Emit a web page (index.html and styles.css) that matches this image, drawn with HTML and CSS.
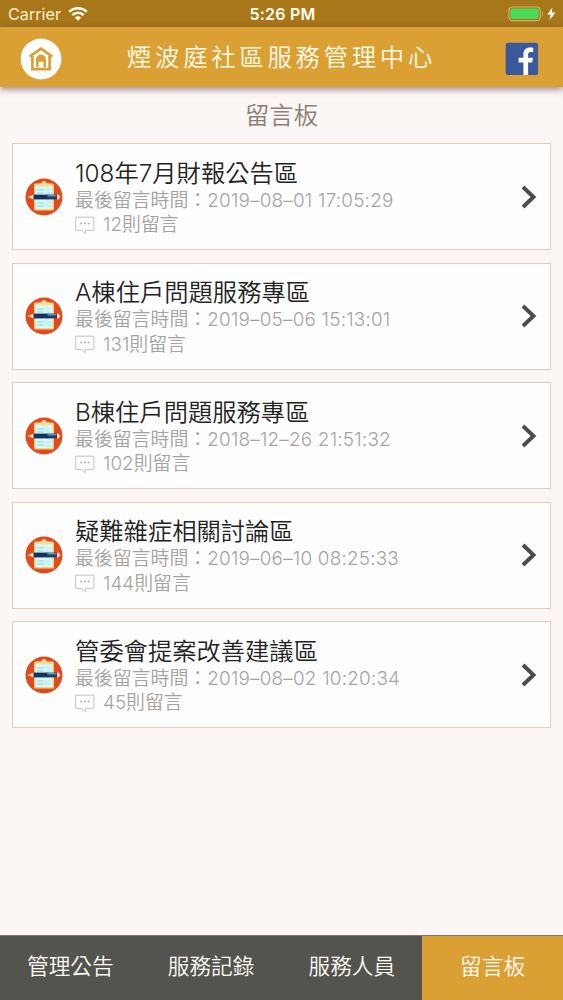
FILE: index.html
```html
<!DOCTYPE html>
<html lang="zh-Hant">
<head>
<meta charset="utf-8">
<title>留言板</title>
<link rel="stylesheet" href="styles.css">
</head>
<body>
<svg class="defs" width="0" height="0">
  <symbol id="board" viewBox="0 0 38 38">
    <circle cx="19" cy="19" r="18.5" fill="#e24a1b"/>
    <rect x="9" y="5.5" width="20" height="27" rx="1.5" fill="#f8cf82"/>
    <rect x="10.6" y="7.5" width="16.8" height="23.5" fill="#d8f8f6"/>
    <path d="M14 8.5V5.5h2.5a2.5 2.5 0 0 1 5 0H24v3z" fill="#f9dc9a"/>
    <path d="M12 12h7M12 15h7M12 25h7M12 28h7" stroke="#9fe3ea" stroke-width="1.3"/>
    <path d="M20 12h6M20 15h6M20 25h6M20 28h6" stroke="#baf1ee" stroke-width="1.3"/>
    <path d="M2.5 19 9 16.6v4.8z" fill="#fbe0bb"/>
    <rect x="8.5" y="16.6" width="15" height="4.8" fill="#17305c"/>
    <rect x="22.5" y="16.6" width="9.5" height="4.8" fill="#203d70"/>
    <path d="M22.5 17.8h9" stroke="#8db1d0" stroke-width="1"/>
    <path d="M32 16.6h1.5l2 2.4-2 2.4H32z" fill="#f2d2b8"/>
  </symbol>
  <symbol id="bubble" viewBox="0 0 20 19">
    <path d="M.7 1.2h18.2v13.1h-8.6v3.4l-4.1-3.4H.7z" fill="none" stroke="#c4c2c2" stroke-width="1" stroke-linejoin="round"/>
    <path d="M5.3 7.5h1.8M9 7.5h1.8M12.7 7.5h1.8" stroke="#a9a7a7" stroke-width="1.5"/>
  </symbol>
  <symbol id="arrow" viewBox="0 0 16 24">
    <path d="M2 2 12.5 12 2 22" fill="none" stroke="#4c4c4c" stroke-width="3.9"/>
  </symbol>
</svg>
<div class="app">
  <div class="status">
    <div class="carrier"><span>Carrier</span>
      <svg width="20" height="14" viewBox="0 0 20 14"><g fill="none" stroke="#fffdf0" stroke-width="2.6"><path d="M1.2 4.8a12.6 12.6 0 0 1 17.6 0"/><path d="M4.3 8.2a8 8 0 0 1 11.4 0"/></g><path d="M10 13.8 6.8 10.6a4.6 4.6 0 0 1 6.4 0z" fill="#fffdf0"/></svg>
    </div>
    <div class="time">5:26 PM</div>
    <svg class="battery" width="49" height="16" viewBox="0 0 49 16"><rect x=".9" y="1" width="31.4" height="13.6" rx="3.5" fill="none" stroke="#d5ae62" stroke-width="1.2"/><rect x="2.4" y="2.6" width="28.3" height="10.4" rx="1.8" fill="#47d957"/><path d="M34 5.2q2 2.6 0 5.2z" fill="#d5ae62"/><path d="m44.4 1.5-5.2 7h3.5l-1.2 5.7 6-7.6h-3.7z" fill="#fff"/></svg>
  </div>
  <header class="header">
    <svg class="home" width="42" height="42" viewBox="0 0 42 42"><circle cx="21" cy="21" r="20.4" fill="#fff"/><g fill="none" stroke="#dba034" stroke-width="2.7"><path d="m9.7 18.6 11.3-8 11.3 8"/><path d="M12.4 18v13.2h17.2V18"/></g><path d="M16 29v-7.5a5 5 0 0 1 10 0V29h-2.6v-5.2h-4.8V29z" fill="#dba034"/></svg>
    <h1 class="brand">煙波庭社區服務管理中心</h1>
    <svg class="fb" width="34" height="34" viewBox="0 0 34 34"><rect x=".7" y=".7" width="32.4" height="32.4" rx="2" fill="#3b589b"/><path d="M18.4 33V20.5h-4.8v-4.8h4.8v-3.6c0-4.5 2.7-6.7 6.5-6.7 1.5 0 2.5.1 3.3.2v4.5h-2.5c-2 0-2.6 1-2.6 2.6v3h4.9l-.8 4.8h-4.1V33z" fill="#fff"/></svg>
  </header>
  <main class="main">
    <h2 class="title">留言板</h2>
    <div class="list">
      <article class="card">
        <svg class="icon"><use href="#board"/></svg>
        <div class="info">
          <h3 class="name">108年7月財報公告區</h3>
          <p class="meta">最後留言時間：<span class="date">2019–08–01 17:05:29</span></p>
          <p class="meta count"><svg class="bubble"><use href="#bubble"/></svg><span>12則留言</span></p>
        </div>
        <svg class="arrow"><use href="#arrow"/></svg>
      </article>
      <article class="card">
        <svg class="icon"><use href="#board"/></svg>
        <div class="info">
          <h3 class="name">A棟住戶問題服務專區</h3>
          <p class="meta">最後留言時間：<span class="date">2019–05–06 15:13:01</span></p>
          <p class="meta count"><svg class="bubble"><use href="#bubble"/></svg><span>131則留言</span></p>
        </div>
        <svg class="arrow"><use href="#arrow"/></svg>
      </article>
      <article class="card">
        <svg class="icon"><use href="#board"/></svg>
        <div class="info">
          <h3 class="name">B棟住戶問題服務專區</h3>
          <p class="meta">最後留言時間：<span class="date">2018–12–26 21:51:32</span></p>
          <p class="meta count"><svg class="bubble"><use href="#bubble"/></svg><span>102則留言</span></p>
        </div>
        <svg class="arrow"><use href="#arrow"/></svg>
      </article>
      <article class="card">
        <svg class="icon"><use href="#board"/></svg>
        <div class="info">
          <h3 class="name">疑難雜症相關討論區</h3>
          <p class="meta">最後留言時間：<span class="date">2019–06–10 08:25:33</span></p>
          <p class="meta count"><svg class="bubble"><use href="#bubble"/></svg><span>144則留言</span></p>
        </div>
        <svg class="arrow"><use href="#arrow"/></svg>
      </article>
      <article class="card">
        <svg class="icon"><use href="#board"/></svg>
        <div class="info">
          <h3 class="name">管委會提案改善建議區</h3>
          <p class="meta">最後留言時間：<span class="date">2019–08–02 10:20:34</span></p>
          <p class="meta count"><svg class="bubble"><use href="#bubble"/></svg><span>45則留言</span></p>
        </div>
        <svg class="arrow"><use href="#arrow"/></svg>
      </article>
    </div>
  </main>
  <nav class="tabs">
    <div class="tab">管理公告</div>
    <div class="tab">服務記錄</div>
    <div class="tab">服務人員</div>
    <div class="tab active">留言板</div>
  </nav>
</div>
</body>
</html>
```

FILE: styles.css
```css
* { box-sizing: border-box; margin: 0; padding: 0; }
body { font-family: Inter, "Noto Sans CJK TC", sans-serif; font-weight: 350; }
.defs { display: block; height: 0; }
.app { height: 1000px; display: flex; flex-direction: column; background: #fcf6f5; overflow: hidden; }
.status { height: 27px; flex: none; display: grid; grid-template-columns: 1fr auto 1fr; align-items: center; background: #a87719; color: #fffdf0; padding: 1px 6px 0 8px; }
.carrier { display: flex; align-items: center; gap: 7px; font-size: 16.2px; font-weight: 400; color: #fbeed0; }
.time { font-size: 16px; font-weight: 600; letter-spacing: .2px; }
.battery { justify-self: end; }
.header { height: 60px; flex: none; display: grid; grid-template-columns: 42px 1fr 42px; align-items: center; padding: 3px 20px 0; background: #dba034; box-shadow: 0 2px 7px rgba(90, 60, 65, .65); z-index: 1; }
.brand { font-size: 24.3px; font-weight: 350; line-height: 36px; letter-spacing: 3.8px; text-align: center; color: #fffbe8; padding-bottom: 3px; white-space: nowrap; }
.fb { justify-self: end; margin-right: 4px; }
.main { flex: 1; padding: 10px 12px 0; }
.title { font-size: 24.3px; font-weight: 350; line-height: 36px; height: 46px; text-align: center; color: #8a807a; }
.list { display: flex; flex-direction: column; gap: 12.5px; }
.card { height: 107px; display: flex; align-items: center; border: 1px solid #e0cbbd; background: #fffefe; padding: 0 13px 0 12px; }
.icon { width: 38px; height: 38px; flex: none; }
.info { flex: 1; padding: 2px 0 0 12px; }
.name { font-size: 24.3px; font-weight: 350; line-height: 31px; color: #222; white-space: nowrap; }
.meta { font-size: 18.9px; line-height: 24.5px; color: #a5a2a2; white-space: nowrap; }
.date { letter-spacing: .2px; }
.count { display: flex; align-items: center; gap: 8px; }
.bubble { width: 20px; height: 19px; }
.arrow { width: 16px; height: 24px; flex: none; }
.tabs { height: 65px; flex: none; display: grid; grid-template-columns: repeat(4, 1fr); background: #54544e; border-top: 1px solid #77756c; }
.tab { display: flex; align-items: center; justify-content: center; padding-bottom: 7px; font-size: 21.7px; color: #fbfaf5; }
.active { background: #dba034; }
```
